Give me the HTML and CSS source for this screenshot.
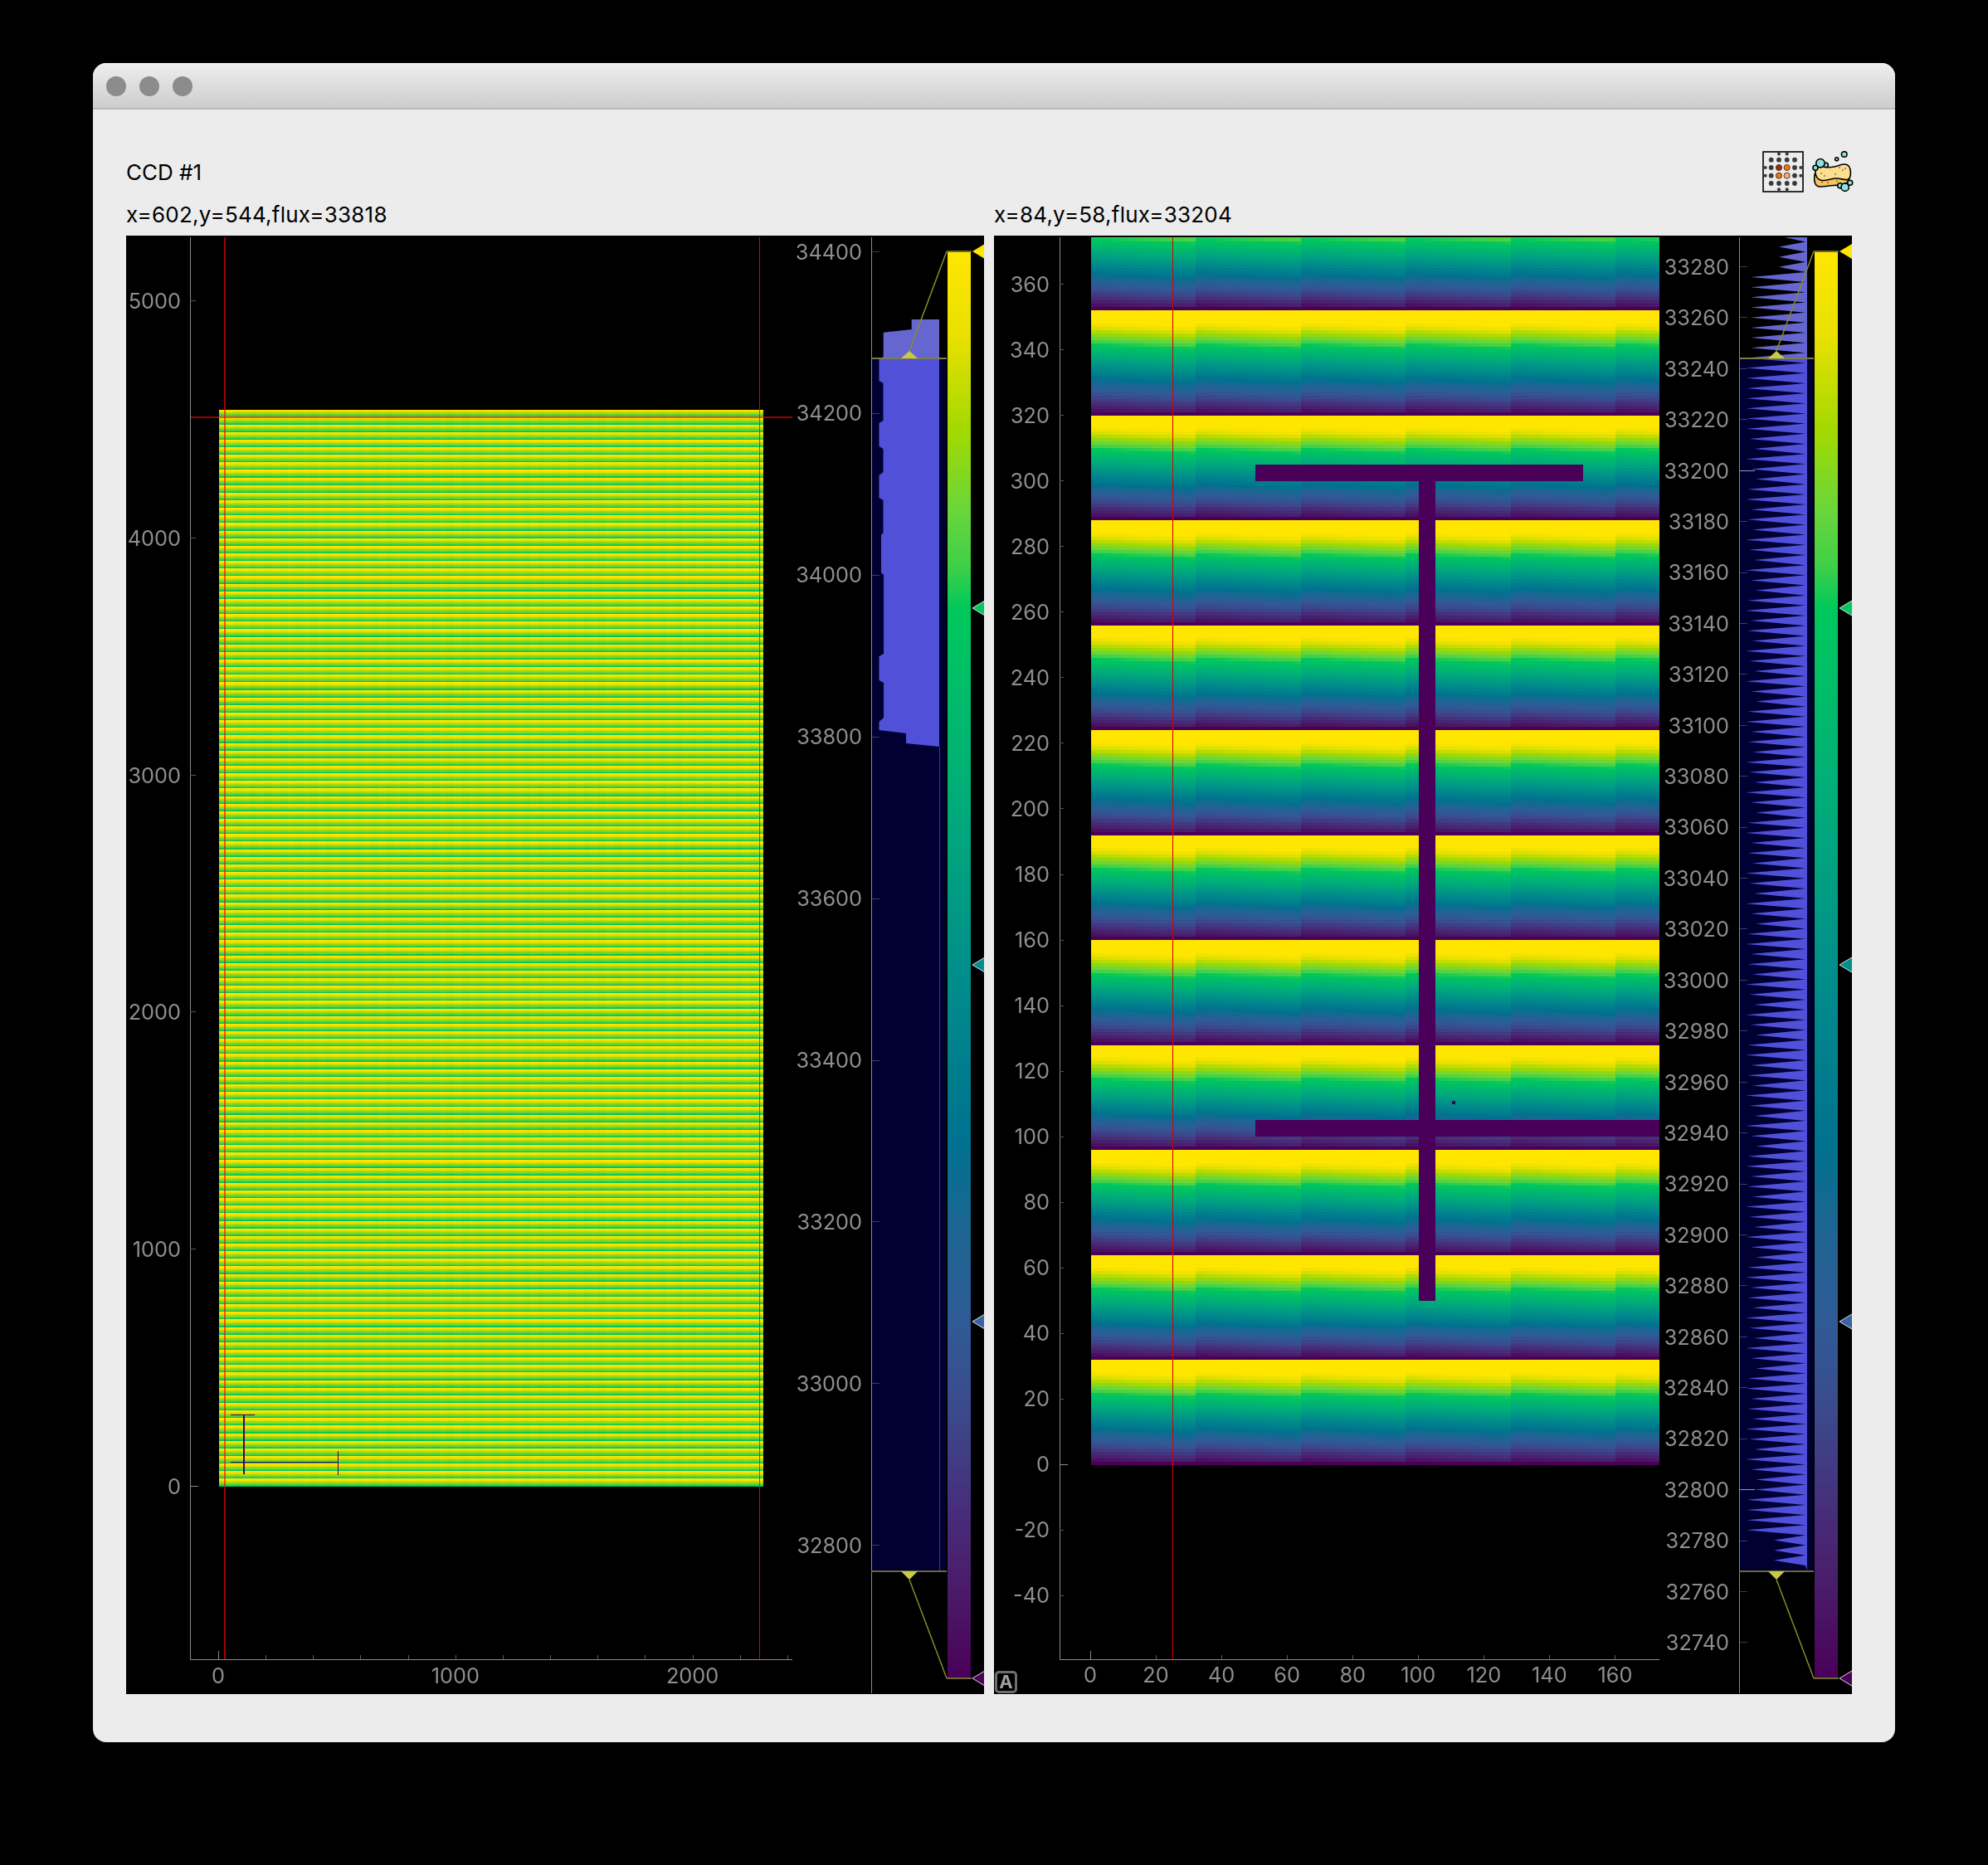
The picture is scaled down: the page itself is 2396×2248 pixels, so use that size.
FILE: index.html
```html
<!DOCTYPE html>
<html lang="en">
<head>
  <meta charset="UTF-8">
  <title>CCD #1</title>
  <link rel="stylesheet" href="styles.css">
</head>
<body>
  <div class="window">
    <div class="titlebar">
      <span class="light"></span><span class="light"></span><span class="light"></span>
    </div>
    <div class="content">
      <div class="header">
        <div class="ccd-name">CCD #1</div>
        <div class="tools">
          <svg class="icon" viewBox="0 0 50 50">
            <rect x="1" y="1" width="48" height="48" fill="#ececec" stroke="#000" stroke-width="1.6"/>
            <g fill="#3a3a3a">
              <circle cx="20" cy="3.5" r="2"/><circle cx="29.7" cy="3.5" r="2"/>
              <circle cx="10.7" cy="10.7" r="2.9"/><circle cx="20" cy="10.7" r="2.9"/><circle cx="29.7" cy="10.7" r="2.9"/><circle cx="39" cy="10.7" r="2.9"/>
              <circle cx="3.7" cy="20" r="2"/><circle cx="10.7" cy="20" r="2.9"/><circle cx="39" cy="20" r="2.9"/><circle cx="46.3" cy="20" r="2"/>
              <circle cx="3.7" cy="29.7" r="2"/><circle cx="10.7" cy="29.7" r="2.9"/><circle cx="39" cy="29.7" r="2.9"/><circle cx="46.3" cy="29.7" r="2"/>
              <circle cx="10.7" cy="39" r="2.9"/><circle cx="20" cy="39" r="2.9"/><circle cx="29.7" cy="39" r="2.9"/><circle cx="39" cy="39" r="2.9"/>
              <circle cx="20" cy="46.3" r="2"/><circle cx="29.7" cy="46.3" r="2"/>
            </g>
            <g stroke="#222" stroke-width="0.8">
              <circle cx="20" cy="20" r="3.6" fill="#a03000"/><circle cx="29.7" cy="20" r="3.6" fill="#f57400"/>
              <circle cx="20" cy="29.7" r="3.6" fill="#f57400"/><circle cx="29.7" cy="29.7" r="3.6" fill="#f7a878"/>
            </g>
          </svg>
          <svg class="icon" viewBox="0 0 50 50">
            <g stroke="#000" stroke-width="1.6" stroke-linejoin="round">
              <path d="M3 28C2 36 3 42.5 9 43C15 43.5 20 41.5 26 41.5C33 41.5 38 40 43 38L45.5 30Z" fill="#f6c45a"/>
              <path d="M4.5 22.5C7 18 11 17.5 15 19C21 21 28 19 35 16.5C41 15 45 17 46 22C47 27 46.5 33 43 34.5C38 35.5 34 32.5 28 33C22 33.5 18 36 12 35.5C6 35 2.5 28 4.5 22.5Z" fill="#fddf90"/>
              <circle cx="16.7" cy="17" r="2.7" fill="#8fe0e0"/>
              <circle cx="10" cy="14.7" r="5.2" fill="#8fe0e0"/>
              <circle cx="4" cy="20.3" r="3" fill="#8fe0e0"/>
              <circle cx="38.7" cy="4" r="3.3" fill="#8fe0e0"/>
              <circle cx="29.7" cy="9.7" r="2" fill="#8fe0e0"/>
              <circle cx="33.7" cy="41.7" r="3" fill="#8fe0e0"/>
              <circle cx="39.7" cy="43.7" r="4.7" fill="#8fe0e0"/>
              <circle cx="45.7" cy="38.3" r="3" fill="#8fe0e0"/>
            </g>
            <g fill="#222">
              <circle cx="11" cy="27" r=".8"/><circle cx="15" cy="30" r=".8"/><circle cx="28" cy="28" r=".8"/><circle cx="33" cy="20" r=".8"/>
              <circle cx="37" cy="23" r=".8"/><circle cx="40" cy="21" r=".8"/><circle cx="12" cy="37.5" r=".8"/><circle cx="19" cy="38" r=".8"/><circle cx="30" cy="36" r=".8"/>
            </g>
          </svg>
        </div>
      </div>
      <div class="views">
        <div class="view">
          <div class="readout">x=602,y=544,flux=33818</div>
          <div class="panel">
            <canvas id="fullPlot" width="1034" height="1758"></canvas>
            <div class="y-labels full-y">
              <span>5000</span><span>4000</span><span>3000</span><span>2000</span><span>1000</span><span>0</span>
            </div>
            <div class="x-labels full-x">
              <span>0</span><span>1000</span><span>2000</span>
            </div>
            <div class="y-labels full-hist">
              <span>34400</span><span>34200</span><span>34000</span><span>33800</span><span>33600</span><span>33400</span><span>33200</span><span>33000</span><span>32800</span>
            </div>
          </div>
        </div>
        <div class="view">
          <div class="readout">x=84,y=58,flux=33204</div>
          <div class="panel">
            <canvas id="zoomPlot" width="1034" height="1758"></canvas>
            <div class="y-labels zoom-y">
              <span>360</span><span>340</span><span>320</span><span>300</span><span>280</span><span>260</span><span>240</span><span>220</span><span>200</span><span>180</span><span>160</span><span>140</span><span>120</span><span>100</span><span>80</span><span>60</span><span>40</span><span>20</span><span>0</span><span>-20</span><span>-40</span>
            </div>
            <div class="x-labels zoom-x">
              <span>0</span><span>20</span><span>40</span><span>60</span><span>80</span><span>100</span><span>120</span><span>140</span><span>160</span>
            </div>
            <div class="y-labels zoom-hist">
              <span>33280</span><span>33260</span><span>33240</span><span>33220</span><span>33200</span><span>33180</span><span>33160</span><span>33140</span><span>33120</span><span>33100</span><span>33080</span><span>33060</span><span>33040</span><span>33020</span><span>33000</span><span>32980</span><span>32960</span><span>32940</span><span>32920</span><span>32900</span><span>32880</span><span>32860</span><span>32840</span><span>32820</span><span>32800</span><span>32780</span><span>32760</span><span>32740</span>
            </div>
            <div class="auto-badge">A</div>
          </div>
        </div>
      </div>
    </div>
  </div>
  <script src="plot.js"></script>
</body>
</html>
```

FILE: styles.css
```css
* { box-sizing: border-box; }
body { margin: 0; background: #000; font-family: Inter, "Liberation Sans", sans-serif; color: #000; }
.window { width: 2172px; height: 2024px; margin: 76px 0 0 112px; background: #ececec; border-radius: 16px; overflow: hidden; }
.titlebar { display: flex; align-items: center; gap: 16px; height: 56px; padding: 2px 16px 0; background: linear-gradient(#eeeeee, #cdcdcd); border-bottom: 2px solid #b9b9b9; }
.light { width: 24px; height: 24px; border-radius: 50%; background: #8c8c8c; }
.content { padding: 0 52px 0 40px; }
.header { display: flex; justify-content: space-between; align-items: center; height: 50px; margin: 50px -2px 0 0; }
.ccd-name { font-size: 26px; }
.tools { display: flex; gap: 10px; }
.icon { display: block; width: 50px; height: 50px; }
.views { display: flex; gap: 12px; }
.view { width: 1034px; }
.readout { height: 52px; line-height: 54px; font-size: 26px; letter-spacing: 0.22px; }
.panel { display: grid; height: 1758px; background: #000; overflow: hidden; color: #8e8e8e; font-size: 25.3px; }
.panel > * { grid-area: 1 / 1; }
.panel canvas { display: block; }
.y-labels { display: flex; flex-direction: column; align-items: flex-end; }
.y-labels span { display: flex; align-items: center; height: 0; }
.x-labels { display: flex; }
.x-labels span { display: flex; justify-content: center; width: 0; height: 0; line-height: 0; white-space: nowrap; }
.full-y { width: 66px; padding-top: 78.6px; gap: 285.8px; }
.full-x { padding: 1736px 0 0 111px; gap: 285.8px; }
.full-hist { width: 887px; padding-top: 19px; gap: 194.9px; }
.zoom-y { width: 67px; padding-top: 58px; gap: 79.06px; }
.zoom-x { padding: 1735px 0 0 116px; gap: 79.06px; }
.zoom-hist { width: 886px; padding-top: 37.5px; gap: 61.42px; }
.auto-badge { align-self: end; justify-self: start; width: 27px; height: 27px; margin: 0 0 1px 1px; border: 3px solid #6e6e6e; border-radius: 5px; color: #a0a0a0; font-size: 22px; font-weight: 700; line-height: 21px; text-align: center; }
```

FILE: plot.js
```js
var stops = [
  [1, [255, 230, 0]], [0.94, [232, 224, 0]], [0.875, [163, 217, 0]], [0.82, [106, 214, 58]],
  [0.78, [63, 208, 72]], [0.75, [0, 200, 92]], [0.625, [0, 174, 120]], [0.5, [0, 143, 138]],
  [0.375, [0, 113, 143]], [0.31, [31, 100, 146]], [0.25, [47, 90, 150]], [0.19, [59, 74, 140]],
  [0.125, [70, 48, 124]], [0.06, [74, 26, 104]], [0, [74, 0, 88]]
];
var PURPLE = 'rgb(74,0,88)';

function cmap(v) {
  v = Math.max(0, Math.min(1, v));
  for (var i = 1; i < stops.length; i++) {
    if (v >= stops[i][0]) {
      var a = stops[i - 1], b = stops[i], t = (v - b[0]) / (a[0] - b[0]);
      return 'rgb(' + [0, 1, 2].map(function (c) { return Math.round(b[1][c] + (a[1][c] - b[1][c]) * t); }).join(',') + ')';
    }
  }
  return PURPLE;
}

function rect(ctx, color, x, y, w, h) {
  ctx.fillStyle = color;
  ctx.fillRect(x, y, w, h);
}

function poly(ctx, color, pts) {
  ctx.beginPath();
  pts.forEach(function (p, i) { i ? ctx.lineTo(p[0], p[1]) : ctx.moveTo(p[0], p[1]); });
  ctx.closePath();
  ctx.fillStyle = color;
  ctx.fill();
}

function line(ctx, color, width, x1, y1, x2, y2) {
  ctx.beginPath();
  ctx.moveTo(x1, y1);
  ctx.lineTo(x2, y2);
  ctx.strokeStyle = color;
  ctx.lineWidth = width;
  ctx.stroke();
}

// shapes stored in the test image, as data x, y, width, height
var shapes = [[50, 300, 100, 5], [100, 50, 5, 255], [50, 100, 125, 5], [110, 110, 1, 1]];

function axes(o) {
  var ctx = o.ctx;
  rect(ctx, '#8a8a8a', o.axisX, 286, 1, 1714);
  rect(ctx, '#8a8a8a', o.axisX, 2000, o.endX - o.axisX, 1);
  o.yTicks.forEach(function (y) {
    var zero = y === o.zeroY;
    rect(ctx, zero ? '#8a8a8a' : '#555', o.axisX, y, zero ? 10 : o.tickLen, 1);
  });
  o.xTicks.forEach(function (x, i) {
    rect(ctx, i ? '#5c5c5c' : '#8a8a8a', x, i ? 1995 : 1990, 1, i ? 5 : 10);
  });
}

function histogram(o) {
  var ctx = o.ctx, ax = o.histX, bar = o.barX;
  rect(ctx, '#000033', ax, 433, bar - 2 - ax, 1461);
  ctx.save();
  ctx.beginPath();
  ctx.rect(ax, 286, bar - ax, 146);
  ctx.clip();
  poly(ctx, '#6666d0', o.shape);
  ctx.restore();
  ctx.save();
  ctx.beginPath();
  ctx.rect(ax, 432, bar - ax, 1462);
  ctx.clip();
  poly(ctx, '#5050d8', o.shape);
  ctx.restore();
  o.ticks.forEach(function (y) { rect(ctx, 'rgba(200,200,200,.3)', ax, y, 10, 1); });
  rect(ctx, '#8a8a8a', ax, 286, 1, 1755);

  // level handles and their connectors
  var hx = o.handleX;
  rect(ctx, '#7c7c4a', ax, 431, bar - 1 - ax, 2);
  rect(ctx, '#6b6b2c', ax, 1893, bar - 1 - ax, 2);
  line(ctx, '#8a8a2a', 1.5, hx, 423, bar - 1, 303);
  line(ctx, '#8a8a2a', 1.5, hx, 1904, bar - 1, 2023);
  poly(ctx, '#c8c84a', [[hx, 423], [hx + 10, 432], [hx - 10, 432]]);
  poly(ctx, '#c8c84a', [[hx, 1904], [hx + 10, 1894], [hx - 10, 1894]]);

  // colour bar
  for (var y = 303; y < 2023; y++) rect(ctx, cmap((2023 - y) / 1720), bar, y, 28, 1);
  rect(ctx, '#6b6b2c', bar - 1, 302, 30, 2);
  rect(ctx, '#6b6b2c', bar - 1, 2022, 30, 2);

  var colors = ['#ffe600', '#00c85c', '#008f8f', '#3a62a4', '#4a0058'];
  colors.forEach(function (c, i) {
    var y = 303 + 430 * i, x = bar + 30, e = x + 15;
    poly(ctx, c, [[x, y], [e, y - 9], [e, y + 9]]);
    if (i) {
      line(ctx, 'rgba(255,255,255,.85)', 1, e, y - 9, x, y);
      line(ctx, 'rgba(255,255,255,.85)', 1, x, y, e, y + 9);
    }
  });
}

function drawFull() {
  var ctx = document.getElementById('fullPlot').getContext('2d');
  ctx.translate(-152, -284);
  var scale = 0.2857, left = 264, right = 920, top = 494, bottom = 1792;
  var segW = 32 * scale, rowH = 32 * scale;

  // data is 32 px periodic: the screen shows the peak of each sampled block
  for (var s = 0; left + s * segW < right; s++) {
    var x0 = Math.round(left + s * segW), x1 = Math.min(right, Math.round(left + (s + 1) * segW));
    for (var y = top; y < bottom; y++) {
      var phase = (bottom - y - 1) / rowH % 1;
      var v = 0.72 + 0.31 * phase + (s % 2 ? 0.008 : 0);
      rect(ctx, cmap(v), x0, y, x1 - x0, 1);
    }
  }
  ctx.fillStyle = PURPLE;
  [[50, 300, 100, 1.6], [100, 50, 7, 250], [50, 100, 450, 1.6], [500, 50, 4, 100]].forEach(function (r) {
    ctx.fillRect(Math.round(left + r[0] * scale), Math.round(bottom - (r[1] + r[3]) * scale - 0.5), Math.max(1, Math.round(r[2] * scale)), Math.max(1, Math.round(r[3] * scale)));
  });

  var yTicks = [362, 648, 934, 1219, 1505, 1791];
  var xTicks = [];
  for (var i = 0; i < 13; i++) xTicks.push(Math.round(263 + i * 57.16));
  axes({ ctx: ctx, axisX: 229, endX: 955, yTicks: yTicks, xTicks: xTicks, zeroY: 1791, tickLen: 7 });

  rect(ctx, 'rgba(255,0,0,.62)', 270, 286, 2, 1714);
  rect(ctx, 'rgba(255,0,0,.85)', 915, 286, 1, 1714);
  rect(ctx, 'rgba(255,0,0,.62)', 230, 502, 725, 2);

  var shape = [
    [1132, 385], [1098.7, 385], [1098.7, 397], [1064.7, 400.7], [1064.7, 430], [1059.5, 433],
    [1059.5, 459], [1064.5, 462], [1064.5, 507], [1059.5, 510], [1059.5, 538], [1064.5, 541],
    [1064.5, 569], [1059.5, 573], [1059.5, 600], [1064.5, 603], [1064.5, 642], [1062, 645],
    [1062, 690], [1065, 693], [1065, 788], [1059.5, 791], [1059.5, 820], [1065, 823],
    [1065, 865], [1059.5, 870], [1059.5, 880], [1092, 884], [1092, 896], [1132, 900]
  ];
  var ticks = [];
  for (var k = 0; k < 9; k++) ticks.push(Math.round(303 + k * 194.9));
  histogram({ ctx: ctx, histX: 1050, barX: 1142, handleX: 1096, shape: shape, ticks: ticks });
  rect(ctx, '#3a3a8a', 1132, 900, 1, 993);
}

function drawZoom() {
  var ctx = document.getElementById('zoomPlot').getContext('2d');
  ctx.translate(-1198, -284);
  var cell = 3.953, left = 1315, bottom = 1765.5, right = 2000, top = 286;

  for (var c = 0; left + c * cell < right; c++) {
    var x0 = Math.round(left + c * cell), x1 = Math.min(right, Math.round(left + (c + 1) * cell));
    var shift = (c % 32) / 32 * 0.05;
    for (var d = 0; bottom - d * cell > top; d++) {
      var y1 = Math.round(bottom - d * cell), y0 = Math.max(top, Math.round(bottom - (d + 1) * cell));
      var r = 31 - (d % 32);
      rect(ctx, cmap((31 - r) / 31 * 1.1 + shift - (r === 31 ? 0.06 : 0)), x0, y0, x1 - x0, y1 - y0);
    }
  }
  ctx.fillStyle = PURPLE;
  shapes.forEach(function (r) {
    var x = Math.round(left + r[0] * cell), w = Math.min(right, Math.round(left + (r[0] + r[2]) * cell)) - x;
    var y = Math.round(bottom - (r[1] + r[3]) * cell), h = Math.round(bottom - r[1] * cell) - y;
    ctx.fillRect(x, y, w, h);
  });

  var yTicks = [], xTicks = [];
  for (var i = 0; i < 21; i++) yTicks.push(Math.round(342 + i * 79.06));
  for (var j = 0; j < 9; j++) xTicks.push(Math.round(1314 + j * 79.06));
  axes({ ctx: ctx, axisX: 1277, endX: 2000, yTicks: yTicks, xTicks: xTicks, zeroY: Math.round(342 + 18 * 79.06), tickLen: 5 });

  rect(ctx, '#d80000', 1413, 286, 1, 1714);

  // sawtooth histogram
  var tips = [2104, 2110, 2106, 2112, 2104, 2108, 2114, 2104, 2110, 2116, 2106];
  var shape = [[2178, 286], [2151, 286], [2176, 291.5]];
  for (var k = -3; k <= 127; k++) {
    var y = 334 + k * 12.18, tip;
    if (k < 0) tip = 2144;
    else if (k < 8) tip = 2110;
    else if (k < 16) tip = 2105;
    else if (k >= 125) tip = 2138;
    else if (k >= 121) tip = 2105;
    else if (k === 120) tip = 2115;
    else tip = tips[k % tips.length];
    shape.push([tip, y], [2176, y + 6.1]);
  }
  shape.push([2178, 1893]);
  var ticks = [];
  for (var m = 0; m < 28; m++) ticks.push(Math.round(321 + m * 61.42));
  histogram({ ctx: ctx, histX: 2096, barX: 2187, handleX: 2141, shape: shape, ticks: ticks });
  rect(ctx, '#9a9aa8', 2097, 567, 18, 1);
  rect(ctx, '#9a9aa8', 2097, 1795, 18, 1);
}

drawFull();
drawZoom();
```
